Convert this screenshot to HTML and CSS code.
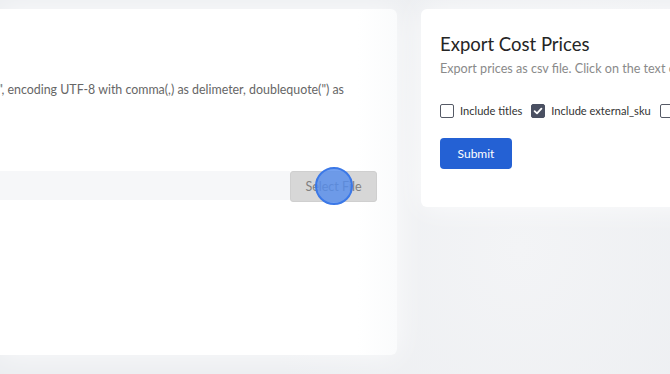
FILE: index.html
```html
<!DOCTYPE html>
<html>
<head>
<meta charset="utf-8">
<link rel="stylesheet" href="styles.css">
</head>
<body>
<div class="page">
  <section class="card card-import">
    <p class="card-text"><span class="line">File should be ".csv", encoding UTF-8 with comma(,) as delimeter, doublequote(") as</span></p>
    <div class="file-row">
      <div class="file-input"></div>
      <div class="file-btn-wrap">
        <button class="file-btn">Select File</button>
        <span class="click-dot"></span>
      </div>
    </div>
  </section>
  <section class="card card-export">
    <h2 class="export-title">Export Cost Prices</h2>
    <p class="export-sub">Export prices as csv file. Click on the text o</p>
    <div class="checks">
      <label class="check"><span class="box"></span>Include titles</label>
      <label class="check"><span class="box checked"><svg viewBox="0 0 14 14" width="14" height="14"><path d="M3.6 7.2 L6 9.4 L10.4 4.6" fill="none" stroke="#fff" stroke-width="1.8" stroke-linecap="round" stroke-linejoin="round"/></svg></span>Include external_sku</label>
      <label class="check"><span class="box"></span></label>
    </div>
    <button class="submit">Submit</button>
  </section>
</div>
</body>
</html>
```

FILE: styles.css
```css
html, body {
  margin: 0;
  padding: 0;
}
body {
  width: 670px;
  height: 374px;
  overflow: hidden;
  background: radial-gradient(ellipse 260px 300px at 520px 250px, #f3f4f6 0%, #eceef1 100%);
  font-family: "Lato", "Open Sans", sans-serif;
}
.page {
  display: flex;
  align-items: flex-start;
  gap: 24px;
  padding-top: 9px;
}
.card {
  background: #fff;
  border-radius: 6px;
  box-sizing: border-box;
  box-shadow: 0 0 30px rgba(255,255,255,0.8);
}
.card-import {
  flex: none;
  width: 397px;
  height: 346px;
  padding: 70px 20px 20px 0;
  border-radius: 0 6px 6px 0;
  background: linear-gradient(90deg, #fff 0%, #fff 90%, #fafbfc 100%);
}
.card-text {
  margin: 0;
  font-size: 12.4px;
  color: #666;
  line-height: 22px;
  display: flex;
  justify-content: flex-end;
  padding-right: 33px;
  overflow: hidden;
}
.card-text .line {
  white-space: nowrap;
}
.file-row {
  display: flex;
  margin-top: 70px;
  align-items: flex-start;
}
.file-input {
  flex: 1;
  height: 29px;
  background: #f6f7f9;
}
.file-btn-wrap {
  position: relative;
}
.file-btn {
  display: block;
  width: 87px;
  height: 31px;
  border: 1px solid #cfcfcf;
  border-radius: 3px;
  background: #d7d7d7;
  color: #808080;
  font-family: inherit;
  font-size: 12.5px;
  padding: 0;
}
.click-dot {
  position: absolute;
  left: 25px;
  top: -4px;
  width: 34px;
  height: 34px;
  border-radius: 50%;
  background: rgba(86, 140, 236, 0.82);
  border: 2px solid #3b78e7;
}
.card-export {
  flex: none;
  width: 300px;
  height: 198px;
  padding: 23px 19px;
}
.export-title {
  margin: 0;
  font-size: 18.5px;
  font-weight: 400;
  color: #252525;
  line-height: 24px;
}
.export-sub {
  margin: 3px 0 0;
  font-size: 12.6px;
  color: #8a8a8a;
  white-space: nowrap;
  line-height: 20px;
}
.checks {
  display: flex;
  gap: 9px;
  margin-top: 24px;
  white-space: nowrap;
}
.check {
  display: flex;
  align-items: center;
  gap: 6px;
  font-size: 11.1px;
  color: #333;
  line-height: 16px;
}
.box {
  width: 14px;
  height: 14px;
  box-sizing: border-box;
  border: 1px solid #555a66;
  border-radius: 2px;
  background: #fff;
  display: flex;
}
.box.checked {
  background: #4a5062;
  border-color: #4a5062;
}
.box svg {
  margin: -1px;
}
.submit {
  display: block;
  margin-top: 19px;
  width: 72px;
  height: 31px;
  border: none;
  border-radius: 4px;
  background: #2461d4;
  color: #fff;
  font-family: inherit;
  font-size: 12px;
  padding: 0;
}
```
